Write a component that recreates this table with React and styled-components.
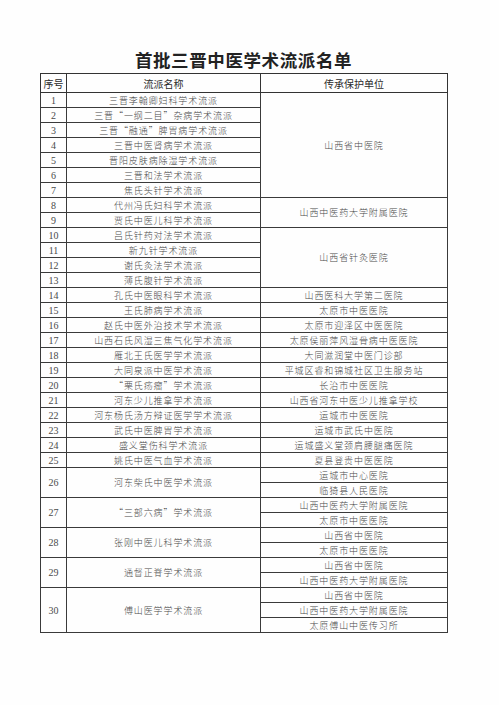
import styled, { createGlobalStyle } from "styled-components";

const GlobalStyle = createGlobalStyle`
  html, body {
    margin: 0;
    padding: 0;
    background: #fff;
  }
  body {
    font-family: "Noto Sans CJK SC", "Liberation Serif", serif;
  }
`;

const Page = styled.div`
  width: 499px;
  height: 705px;
  box-sizing: border-box;
  padding: 50px 0 0 40px;
  background: #fefefe;
`;

const Title = styled.h1`
  width: 407px;
  margin: 0 0 3px;
  text-align: center;
  font-family: "Noto Sans CJK SC", sans-serif;
  font-weight: 700;
  font-size: 17.5px;
  line-height: 20px;
  letter-spacing: 0.6px;
  color: #222;
`;

const Table = styled.table`
  width: 407px;
  border-collapse: collapse;
  table-layout: fixed;
  border: 1px solid #222;
`;

const HeadCell = styled.th`
  height: 19px;
  padding: 0;
  box-sizing: border-box;
  border: 1px solid #333;
  font-family: "Noto Sans CJK SC", sans-serif;
  font-weight: 400;
  font-size: 10px;
  line-height: 17px;
  color: #2a2a2a;
  text-align: center;
`;

const Cell = styled.td`
  height: 15px;
  padding: 0;
  box-sizing: border-box;
  border: 1px solid #3a3a3a;
  text-align: center;
  vertical-align: middle;
  white-space: nowrap;
  color: #4a4a4a;
  font-family: ${(p) =>
    p.$num ? '"Liberation Serif", serif' : '"Noto Sans CJK SC", sans-serif'};
  font-weight: ${(p) => (p.$num ? 400 : 300)};
  font-size: ${(p) => (p.$num ? "10px" : "9px")};
  letter-spacing: ${(p) => (p.$num ? "0" : "0.9px")};
  line-height: 13px;
`;

const rows = [
  { n: 1, name: "三晋李翰卿妇科学术流派", unit: "山西省中医院", span: 7 },
  { n: 2, name: "三晋“一纲二目”杂病学术流派" },
  { n: 3, name: "三晋“融通”脾胃病学术流派" },
  { n: 4, name: "三晋中医肾病学术流派" },
  { n: 5, name: "晋阳皮肤病除湿学术流派" },
  { n: 6, name: "三晋和法学术流派" },
  { n: 7, name: "焦氏头针学术流派" },
  { n: 8, name: "代州冯氏妇科学术流派", unit: "山西中医药大学附属医院", span: 2 },
  { n: 9, name: "贾氏中医儿科学术流派" },
  { n: 10, name: "吕氏针药对法学术流派", unit: "山西省针灸医院", span: 4 },
  { n: 11, name: "新九针学术流派" },
  { n: 12, name: "谢氏灸法学术流派" },
  { n: 13, name: "薄氏腹针学术流派" },
  { n: 14, name: "孔氏中医眼科学术流派", unit: "山西医科大学第二医院" },
  { n: 15, name: "王氏肺病学术流派", unit: "太原市中医医院" },
  { n: 16, name: "赵氏中医外治技术学术流派", unit: "太原市迎泽区中医医院" },
  { n: 17, name: "山西石氏风湿三焦气化学术流派", unit: "太原侯丽萍风湿骨病中医医院" },
  { n: 18, name: "雁北王氏医学学术流派", unit: "大同滋润堂中医门诊部" },
  { n: 19, name: "大同泉派中医学术流派", unit: "平城区睿和锦城社区卫生服务站" },
  { n: 20, name: "“栗氏疡瘤”学术流派", unit: "长治市中医医院" },
  { n: 21, name: "河东少儿推拿学术流派", unit: "山西省河东中医少儿推拿学校" },
  { n: 22, name: "河东杨氏汤方辩证医学学术流派", unit: "运城市中医医院" },
  { n: 23, name: "武氏中医脾胃学术流派", unit: "运城市武氏中医院" },
  { n: 24, name: "盛义堂伤科学术流派", unit: "运城盛义堂颈肩腰腿痛医院" },
  { n: 25, name: "姚氏中医气血学术流派", unit: "夏县登贵中医医院" },
  { n: 26, name: "河东柴氏中医学术流派", units: ["运城市中心医院", "临猗县人民医院"] },
  { n: 27, name: "“三部六病”学术流派", units: ["山西中医药大学附属医院", "太原市中医医院"] },
  { n: 28, name: "张刚中医儿科学术流派", units: ["山西省中医院", "太原市中医医院"] },
  { n: 29, name: "通督正脊学术流派", units: ["山西省中医院", "山西中医药大学附属医院"] },
  {
    n: 30,
    name: "傅山医学学术流派",
    units: ["山西省中医院", "山西中医药大学附属医院", "太原傅山中医传习所"],
  },
];

function renderRow(row) {
  if (row.units) {
    const len = row.units.length;
    return row.units.map((u, i) => (
      <tr key={`${row.n}-${i}`}>
        {i === 0 && (
          <>
            <Cell $num rowSpan={len}>{row.n}</Cell>
            <Cell rowSpan={len}>{row.name}</Cell>
          </>
        )}
        <Cell>{u}</Cell>
      </tr>
    ));
  }
  return (
    <tr key={row.n}>
      <Cell $num>{row.n}</Cell>
      <Cell>{row.name}</Cell>
      {row.unit && <Cell rowSpan={row.span || 1}>{row.unit}</Cell>}
    </tr>
  );
}

export default function App() {
  return (
    <>
      <GlobalStyle />
      <Page>
        <Title>首批三晋中医学术流派名单</Title>
        <Table>
          <colgroup>
            <col style={{ width: 26 }} />
            <col style={{ width: 194 }} />
            <col style={{ width: 187 }} />
          </colgroup>
          <thead>
            <tr>
              <HeadCell>序号</HeadCell>
              <HeadCell>流派名称</HeadCell>
              <HeadCell>传承保护单位</HeadCell>
            </tr>
          </thead>
          <tbody>{rows.map(renderRow)}</tbody>
        </Table>
      </Page>
    </>
  );
}
